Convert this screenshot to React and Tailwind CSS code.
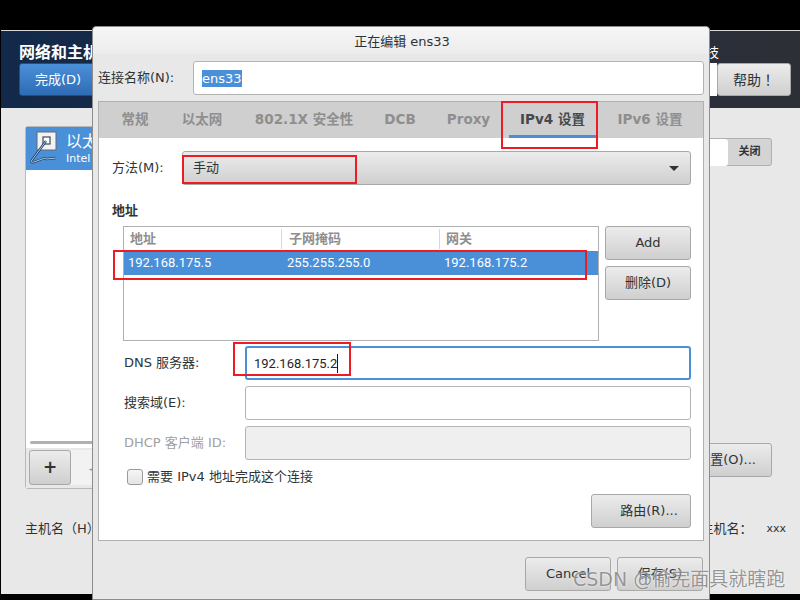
const font = { fontFamily: '"DejaVu Sans", "Noto Sans CJK SC", sans-serif' };
const ipFont = { fontFamily: 'Roboto, sans-serif' };
const btn = "flex items-center justify-center rounded-[3px] border border-[#a8a8a8] bg-gradient-to-b from-[#ececec] to-[#cfcfcf] text-[13px] text-[#2e3436]";

function Tab({ className, active, children }) {
  return (
    <div
      className={`flex h-[36px] items-center justify-center font-bold text-[13.5px] ${className} ${
        active ? "border-b-[3px] border-[#4a90d9] pt-[2px] text-[#444a4c]" : "pb-[2px] text-[#8e8e8e]"
      }`}
    >
      {children}
    </div>
  );
}

function Field({ label, disabled, focused, children }) {
  return (
    <div className="flex h-[34px] items-center">
      <div className={`w-[133px] pl-[12px] text-[13px] ${disabled ? "text-[#a0a0a0]" : "text-[#2e3436]"}`}>{label}</div>
      <div
        className={`flex h-[34px] w-[446px] items-center rounded-[3px] ${
          focused
            ? "border-2 border-[#4a90d9] bg-white pl-[7px]"
            : disabled
              ? "border border-[#b4b4b4] bg-[#efefef]"
              : "border border-[#b4b4b4] bg-white"
        }`}
      >
        {children}
      </div>
    </div>
  );
}

function NetIcon() {
  return (
    <svg width="30" height="36" viewBox="0 0 30 36" className="shrink-0">
      <rect x="8" y="1" width="19" height="18" fill="#f2f2f2" stroke="#5c6a78" />
      <rect x="14" y="6" width="7" height="7" fill="#fff" stroke="#3a4856" strokeWidth="1.2" />
      <path d="M17 10 L3 29 Q1 32 5 31 L13 28 Q15 27 18 28 L27 27" fill="none" stroke="#24436b" strokeWidth="2.4" />
      <path d="M17 10 L3 29 Q1 32 5 31 L13 28 Q15 27 18 28 L27 27" fill="none" stroke="#a9c6e6" strokeWidth="1" />
    </svg>
  );
}

function Background() {
  return (
    <div className="ml-px flex h-[564px] flex-col bg-[#e8e8e8]">
      <div className="relative flex h-[78px] justify-between border-t border-[#d8d8d8] bg-gradient-to-r from-[#12294a] to-[#2d2f36] pl-[18px] pr-[9px]">
        <div className="flex flex-col">
          <div className="mt-[12px] h-[20px] text-[16px] leading-[20px] font-bold whitespace-nowrap text-white">网络和主机名(N)</div>
          <div className="flex h-[33px] w-[78px] items-center justify-center rounded-[3px] border border-[#1d4f8f] bg-gradient-to-b from-[#4a90d9] to-[#2e6cb5] text-[13px] text-white">
            完成(D)
          </div>
        </div>
        <div className="flex flex-col items-end">
          <div className="mt-[12px] h-[20px] pr-[72px] text-[13px] leading-[20px] text-white">技</div>
          <div className="flex">
            <div className="h-[33px] w-[8px] bg-white" />
            <div className={`${btn} h-[33px] w-[74px] !text-[14px]`} style={{ fontFamily: '"Noto Sans CJK TC", sans-serif' }}>帮助！</div>
          </div>
        </div>
      </div>

      <div className="flex flex-1 flex-col pt-[18px] pr-[28px] pl-[24px]">
        <div className="flex justify-between">
          <div className="flex h-[363px] w-[300px] flex-col rounded-[3px] border border-[#b8b8b8] bg-white">
            <div className="flex h-[43px] items-center gap-[7px] bg-[#4a90d9] pl-[3px] text-white">
              <NetIcon />
              <div className="flex flex-col">
                <div className="text-[16px] leading-[20px]">以太网 (ens33)</div>
                <div className="text-[11px] leading-[14px]">Intel Corporation</div>
              </div>
            </div>
            <div className="flex-1" />
            <div className="mx-[4px] h-[3px] rounded-full bg-[#b0b0b0]" />
            <div className="mt-[4px] flex h-[40px] bg-[#e8e8e8] px-[3px] pt-[2px]">
              <div className={`${btn} h-[35px] w-[42px] !text-[17px] font-bold`}>+</div>
              <div className="flex h-[35px] w-[42px] items-center justify-center bg-[#f2f2f2] text-[18px] text-[#8e8e8e]">-</div>
            </div>
          </div>
          <div className="flex w-[120px] flex-col items-end">
            <div className="mt-[12px] flex h-[28px] w-[100px] items-center justify-end rounded-[3px] border border-[#b0b0b0] bg-[#d4d4d4]">
              <div className="h-[27px] w-[55px] rounded-[3px] bg-white" />
              <div className="flex flex-1 items-center justify-center text-[11px] font-bold text-[#2e3436]">关闭</div>
            </div>
            <div className={`${btn} mt-[277px] h-[34px] w-[120px] justify-end pr-[15px]`}>配置(O)...</div>
          </div>
        </div>
        <div className="mt-[30px] -mr-[14px] flex justify-between text-[13px] text-[#2e3436]">
          <div>主机名（H）:</div>
          <div className="flex gap-[14px]">
            <div>当前主机名：</div>
            <div className="text-[11px] leading-[20px]">xxx</div>
          </div>
        </div>
      </div>
    </div>
  );
}

function Dialog() {
  return (
    <div className="absolute top-[26px] left-[92px] flex h-[574px] w-[618px] flex-col rounded-t-[4px] border border-[#8c8c8c] bg-[#e8e8e8] px-[5px]">
      <div className="-mx-[5px] flex h-[27px] shrink-0 items-center justify-center rounded-t-[4px] bg-gradient-to-b from-[#f6f6f6] to-[#ececec] pt-[2px] pl-[2px] text-[13px] text-[#2e3436]">
        正在编辑 ens33
      </div>
      <div className="mt-[7px] flex h-[34px] items-center">
        <div className="w-[95px] text-[13px] text-[#2e3436]">连接名称(N):</div>
        <div className="flex h-[34px] flex-1 items-center rounded-[3px] border border-[#b4b4b4] bg-white pl-[8px]">
          <span className="bg-[#4a90d9] text-[13px] leading-[17px] text-white">ens33</span>
        </div>
      </div>

      <div className="mt-[6px] h-[440px] border border-[#b0b0b0] bg-white">
        <div className="flex h-[36px] bg-[#cfcfcf]">
          <Tab className="ml-[22px] w-[28px]">常规</Tab>
          <Tab className="ml-[33px] w-[40px] whitespace-nowrap">以太网</Tab>
          <Tab className="ml-[33px] w-[98px] whitespace-nowrap">802.1X 安全性</Tab>
          <Tab className="ml-[32px] w-[30px]">DCB</Tab>
          <Tab className="ml-[33px] w-[41px]">Proxy</Tab>
          <Tab active className="ml-[20px] w-[87px] whitespace-nowrap">IPv4 设置</Tab>
          <Tab className="ml-[22px] w-[64px] whitespace-nowrap">IPv6 设置</Tab>
        </div>

        <div className="pt-[13px] pr-[12px] pl-[13px]">
          <div className="flex h-[34px] items-center">
            <div className="w-[70px] text-[13px] text-[#2e3436]">方法(M):</div>
            <div className={`${btn} h-[34px] flex-1 !justify-between pr-[11px] pl-[10px]`}>
              <span>手动</span>
              <span className="h-0 w-0 border-x-[5px] border-t-[5px] border-x-transparent border-t-[#2e3436]" />
            </div>
          </div>

          <div className="mt-[16px] text-[13px] leading-[20px] font-bold text-[#2e3436]">地址</div>

          <div className="mt-[5px] flex gap-[6px] pl-[11px]">
            <div className="h-[115px] w-[476px] border border-[#b0b0b0] bg-white">
              <div className="flex h-[24px] items-center text-[13px] font-bold text-[#8e8e8e]">
                <div className="w-[158px] border-r border-[#d8d8d8] pl-[6px]">地址</div>
                <div className="w-[158px] border-r border-[#d8d8d8] pl-[7px]">子网掩码</div>
                <div className="pl-[6px]">网关</div>
              </div>
              <div className="flex h-[24px] items-center bg-[#4a90d9] text-[13px] text-white" style={ipFont}>
                <div className="w-[158px] pl-[4px]">192.168.175.5</div>
                <div className="w-[158px] pl-[5px]">255.255.255.0</div>
                <div className="pl-[4px]">192.168.175.2</div>
              </div>
            </div>
            <div className="flex flex-col gap-[6px]">
              <div className={`${btn} h-[34px] w-[86px]`}>Add</div>
              <div className={`${btn} h-[34px] w-[86px]`}>删除(D)</div>
            </div>
          </div>

          <div className="mt-[5px] flex flex-col gap-[6px]">
            <Field label="DNS 服务器:" focused>
              <span className="border-r border-[#1a1a1a] text-[13px] leading-[19px] text-[#1f2426]" style={ipFont}>192.168.175.2</span>
            </Field>
            <Field label="搜索域(E):" />
            <Field label="DHCP 客户端 ID:" disabled />
          </div>

          <div className="mt-[7px] ml-[15px] flex items-center gap-[4px]">
            <div className="h-[16px] w-[16px] rounded-[3px] border border-[#9a9a9a] bg-gradient-to-b from-[#f6f6f6] to-[#e4e4e4]" />
            <div className="text-[13px] text-[#2e3436]">需要 IPv4 地址完成这个连接</div>
          </div>

          <div className="mt-[7px] flex justify-end">
            <div className={`${btn} h-[34px] w-[100px] pl-[16px]`}>路由(R)...</div>
          </div>
        </div>
      </div>

      <div className="mt-[16px] flex justify-end gap-[6px] pr-[1px]">
        <div className={`${btn} h-[34px] w-[86px]`}>Cancel</div>
        <div className={`${btn} h-[34px] w-[86px]`}>保存(S)</div>
      </div>
    </div>
  );
}

export default function App() {
  return (
    <div className="relative h-[600px] w-[800px] overflow-hidden bg-black pt-[30px]" style={font}>
      <Background />
      <Dialog />

      {/* red annotation boxes */}
      <div className="absolute top-[155px] left-[182px] h-[29px] w-[175px] border-2 border-[#ed1c24]" />
      <div className="absolute top-[101px] left-[501px] h-[48px] w-[97px] border-2 border-[#ed1c24]" />
      <div className="absolute top-[250px] left-[113px] h-[30px] w-[474px] border-2 border-[#ed1c24]" />
      <div className="absolute top-[342px] left-[233px] h-[34px] w-[118px] border-2 border-[#ed1c24]" />

      <div className="absolute top-[566px] left-[573px] text-[19px] leading-[26px] whitespace-nowrap text-[#7c7c7c]/80 [text-shadow:0_0_2px_#fff]">
        CSDN @偷完面具就瞎跑
      </div>
    </div>
  );
}
